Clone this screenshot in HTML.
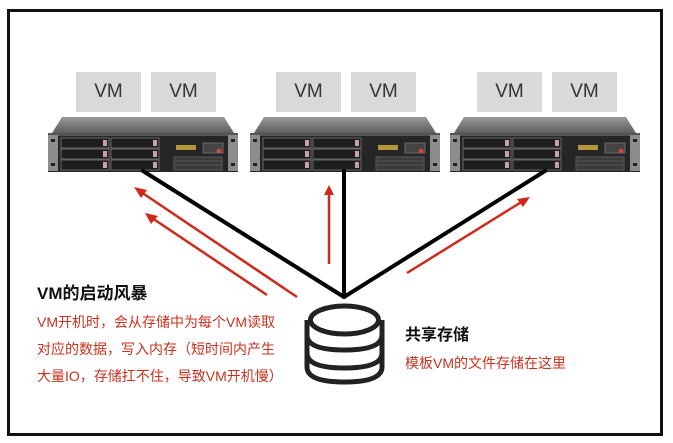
<!DOCTYPE html>
<html><head><meta charset="utf-8"><style>
html,body{margin:0;padding:0;background:#fff;}
body{width:673px;height:443px;position:relative;overflow:hidden;font-family:"Liberation Sans","Noto Sans CJK SC",sans-serif;}
.frame{position:absolute;left:7px;top:9px;width:650px;height:421px;border:3px solid #111;}
.vm{position:absolute;width:65px;height:40px;background:#d9d9d9;color:#333;font-size:19px;text-align:center;line-height:40px;}
.t{position:absolute;white-space:nowrap;}
</style></head><body>
<div class="frame"></div>
<div class="vm" style="left:76px;top:72px">VM</div>
<div class="vm" style="left:151px;top:72px">VM</div>
<div class="vm" style="left:276px;top:72px">VM</div>
<div class="vm" style="left:351px;top:72px">VM</div>
<div class="vm" style="left:477px;top:72px">VM</div>
<div class="vm" style="left:552px;top:72px">VM</div>
<svg width="673" height="443" style="position:absolute;left:0;top:0">
<defs>
<linearGradient id="tg" x1="0" y1="0" x2="0" y2="1"><stop offset="0" stop-color="#9a9a9a"/><stop offset="1" stop-color="#5e5e5e"/></linearGradient>
<g id="srv">
<polygon points="14,2 176,2 186,18 4,18" fill="url(#tg)"/>
<rect x="0" y="18" width="190" height="39" fill="#262626"/>
<rect x="0" y="18" width="190" height="3" fill="#555"/>
<rect x="0" y="20" width="10" height="36" fill="#8c8c8c"/>
<rect x="180" y="20" width="10" height="36" fill="#8c8c8c"/>
<rect x="3" y="24" width="4" height="3" fill="#222"/><rect x="3" y="48" width="4" height="3" fill="#222"/>
<rect x="183" y="24" width="4" height="3" fill="#222"/><rect x="183" y="48" width="4" height="3" fill="#222"/>
<g fill="#1e1e1e" stroke="#777" stroke-width="0.8">
<rect x="13" y="23" width="48" height="10"/><rect x="13" y="34" width="48" height="10"/><rect x="13" y="45" width="48" height="10"/>
<rect x="63" y="23" width="48" height="10"/><rect x="63" y="34" width="48" height="10"/><rect x="63" y="45" width="48" height="10"/>
</g>
<g fill="#c9a0a8"><rect x="55" y="25" width="4" height="6"/><rect x="55" y="36" width="4" height="6"/><rect x="55" y="47" width="4" height="6"/><rect x="105" y="25" width="4" height="6"/><rect x="105" y="36" width="4" height="6"/><rect x="105" y="47" width="4" height="6"/></g>
<rect x="128" y="30" width="20" height="5" fill="#b5953a"/>
<rect x="155" y="28" width="20" height="10" fill="#444" stroke="#777" stroke-width="0.8"/>
<circle cx="171" cy="36" r="2.5" fill="#c44"/>
<rect x="126" y="42" width="48" height="13" fill="#3a3a3a" stroke="#666" stroke-width="0.8"/>
<g stroke="#555" stroke-width="1"><line x1="127" y1="46" x2="173" y2="46"/><line x1="127" y1="50" x2="173" y2="50"/></g>
</g>
</defs>
<use href="#srv" x="48" y="115"/>
<use href="#srv" x="250" y="115"/>
<use href="#srv" x="450" y="115"/>
<g stroke="#000" stroke-width="4" stroke-linecap="round">
<line x1="143" y1="171" x2="344" y2="297"/>
<line x1="344" y1="171" x2="344" y2="297"/>
<line x1="545" y1="171" x2="344" y2="297"/>
</g>
<g stroke="#d0281a" stroke-width="2.5" fill="#d0281a">
<line x1="297" y1="297" x2="141" y2="192"/><polygon points="134,187 147,190 141,198" stroke="none"/>
<line x1="267" y1="295" x2="152" y2="218"/><polygon points="145,213 158,216 151,224" stroke="none"/>
<line x1="329" y1="264" x2="329" y2="193"/><polygon points="329,185 324,195 334,195" stroke="none"/>
<line x1="407" y1="273" x2="523" y2="201"/><polygon points="530,197 517,199 523,207" stroke="none"/>
</g>
<g fill="none" stroke="#222" stroke-width="5">
<path d="M307,320 L307,367 Q307,382 344.5,382 Q382,382 382,367 L382,320"/>
<ellipse cx="344.5" cy="320" rx="34" ry="14"/>
<path d="M307,335 Q307,350 344.5,350 Q382,350 382,335"/>
<path d="M307,353 Q307,368 344.5,368 Q382,368 382,353"/>
</g>
</svg>
<div class="t" style="left:37px;top:279px;font-size:17px;font-weight:bold;color:#111">VM的启动风暴</div>
<div class="t" style="left:37px;top:309px;font-size:14px;color:#c8321f;line-height:27px">VM开机时，会从存储中为每个VM读取<br>对应的数据，写入内存（短时间内产生<br>大量IO，存储扛不住，导致VM开机慢）</div>
<div class="t" style="left:405px;top:321px;font-size:16px;font-weight:bold;color:#111">共享存储</div>
<div class="t" style="left:405px;top:353px;font-size:14px;color:#c8321f">模板VM的文件存储在这里</div>
</body></html>
